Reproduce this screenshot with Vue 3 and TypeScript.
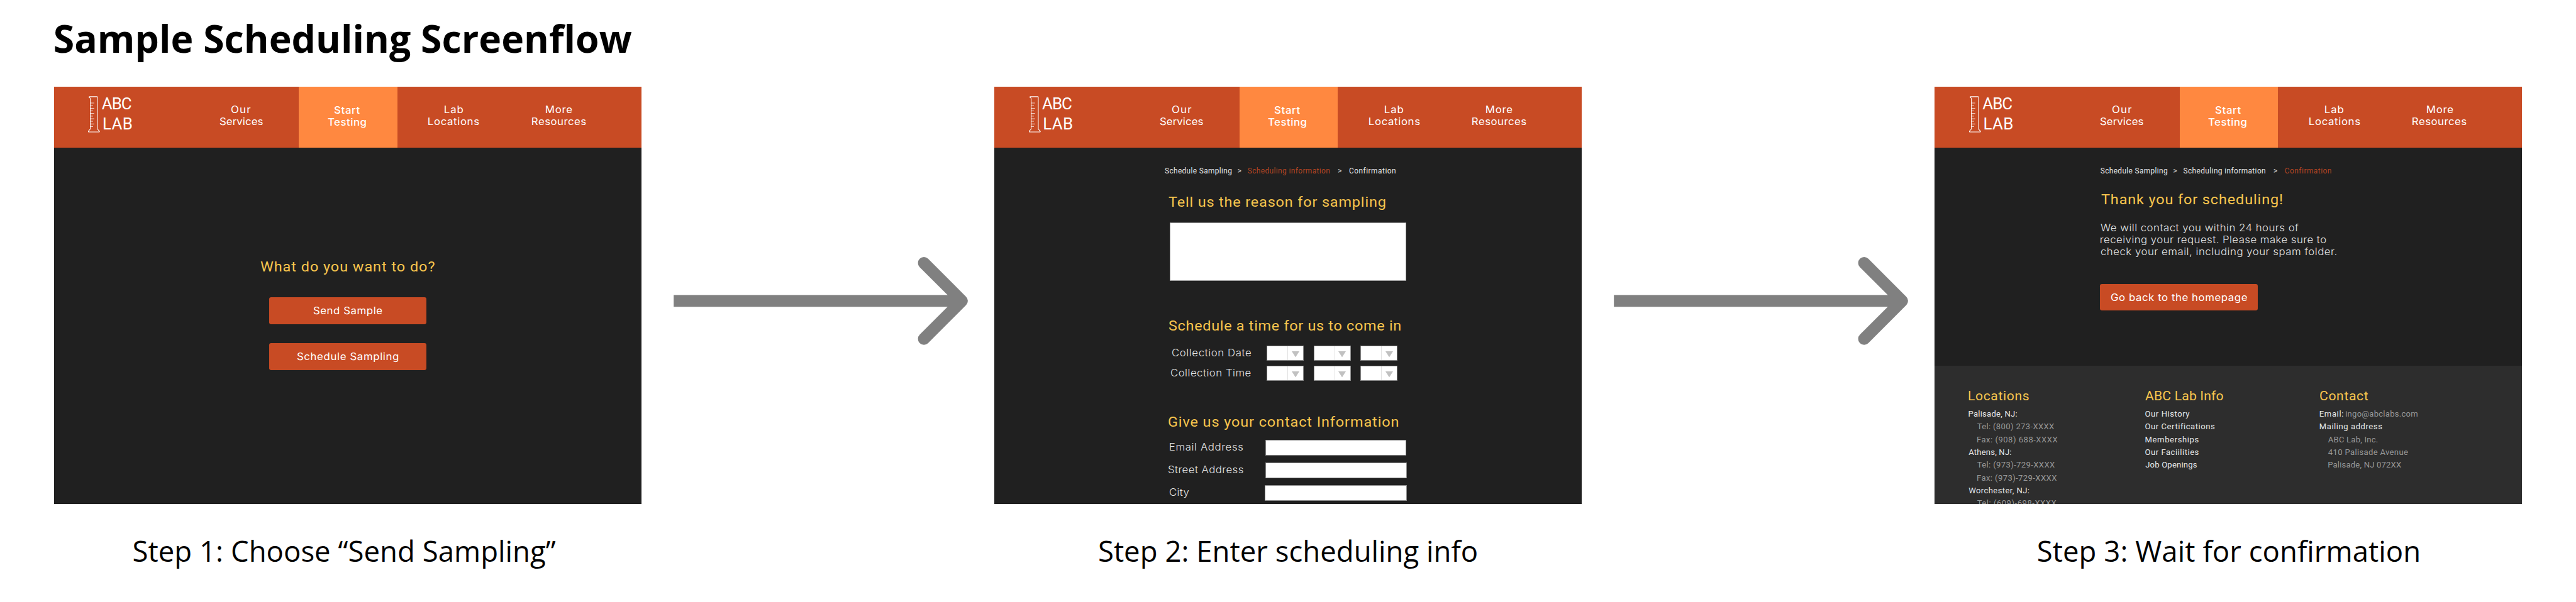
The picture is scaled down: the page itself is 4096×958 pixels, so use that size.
<script setup lang="ts">
import type { Directive } from 'vue'

/**
 * Tracks a run of text out to the given width and trims the side bearings,
 * so that the element's box is exactly as wide as its visible letters.
 * The --stretch property widens the letterforms themselves.
 */
const context = document.createElement('canvas').getContext('2d')!
const vTrack: Directive<HTMLElement, number> = {
  mounted(el, binding) {
    const text = (el.textContent ?? '').trim()
    const css = getComputedStyle(el)
    const stretch = Number(css.getPropertyValue('--stretch')) || 1
    const width = binding.value / stretch
    context.font = `${css.fontWeight} ${css.fontSize} ${css.fontFamily}`
    const m = context.measureText(text)
    const letters = m.actualBoundingBoxLeft + m.actualBoundingBoxRight
    const spacing = text.length > 1 ? (width - letters) / (text.length - 1) : 0
    const trailing = m.actualBoundingBoxRight - m.width - spacing
    el.style.letterSpacing = `${spacing}px`
    el.style.marginLeft = `${m.actualBoundingBoxLeft}px`
    el.style.marginRight = `${trailing + binding.value - width}px`
    if (stretch !== 1) {
      el.style.transformOrigin = `${-m.actualBoundingBoxLeft}px 50%`
      el.style.transform = `scaleX(${stretch})`
    }
  },
}

interface Line {
  text: string
  w: number
}
interface NavItem {
  lines: Line[]
  active?: boolean
}
interface Entry extends Line {
  sub?: boolean
  value?: Line
}

const nav: NavItem[] = [
  { lines: [{ text: 'Our', w: 49 }, { text: 'Services', w: 108 }] },
  { lines: [{ text: 'Start', w: 64 }, { text: 'Testing', w: 96 }], active: true },
  { lines: [{ text: 'Lab', w: 46 }, { text: 'Locations', w: 127 }] },
  { lines: [{ text: 'More', w: 65 }, { text: 'Resources', w: 135 }] },
]

const screens = [
  { id: 'choose', caption: { text: 'Step 1: Choose “Send Sampling”', w: 1062 } },
  { id: 'details', caption: { text: 'Step 2: Enter scheduling info', w: 950 } },
  { id: 'done', caption: { text: 'Step 3: Wait for confirmation', w: 958 } },
]

const crumbs: Line[] = [
  { text: 'Schedule Sampling', w: 168.5 },
  { text: 'Scheduling information', w: 207 },
  { text: 'Confirmation', w: 116 },
]

const choices: Line[] = [
  { text: 'Send Sample', w: 172 },
  { text: 'Schedule Sampling', w: 254 },
]

const pickers = [
  { text: 'Collection Date', w: 198.6, x: 446.6 },
  { text: 'Collection Time', w: 201, x: 443.6 },
]

const fields = [
  { text: 'Email Address', w: 184, x: 441.2, start: 681.2, size: 355.6 },
  { text: 'Street Address', w: 189, x: 437.9, start: 682.2, size: 355 },
  { text: 'City', w: 49, x: 440.8, start: 680.2, size: 357 },
]

const message: Line[] = [
  { text: 'We will contact you within 24 hours of', w: 498 },
  { text: 'receiving your request. Please make sure to', w: 566.5 },
  { text: 'check your email, including your spam folder.', w: 592.5 },
]

const columns: { key: string; title: Line; entries: Entry[] }[] = [
  {
    key: 'locations',
    title: { text: 'Locations', w: 151.7 },
    entries: [
      { text: 'Palisade, NJ:', w: 121.5 },
      { text: 'Tel: (800) 273-XXXX', w: 194, sub: true },
      { text: 'Fax: (908) 688-XXXX', w: 202.5, sub: true },
      { text: 'Athens, NJ:', w: 107 },
      { text: 'Tel: (973)-729-XXXX', w: 195.5, sub: true },
      { text: 'Fax: (973)-729-XXXX', w: 200.5, sub: true },
      { text: 'Worchester, NJ:', w: 152 },
      { text: 'Tel: (609)-698-XXXX', w: 199.5, sub: true },
    ],
  },
  {
    key: 'info',
    title: { text: 'ABC Lab Info', w: 196.8 },
    entries: [
      { text: 'Our History', w: 111.5 },
      { text: 'Our Certifications', w: 173.5 },
      { text: 'Memberships', w: 134 },
      { text: 'Our Faciilities', w: 134 },
      { text: 'Job Openings', w: 129.5 },
    ],
  },
  {
    key: 'contact',
    title: { text: 'Contact', w: 121.4 },
    entries: [
      { text: 'Email:', w: 59, value: { text: 'ingo@abclabs.com', w: 180.5 } },
      { text: 'Mailing address', w: 156.7 },
      { text: 'ABC Lab, Inc.', w: 124, sub: true },
      { text: '410 Palisade Avenue', w: 201, sub: true },
      { text: 'Palisade, NJ 072XX', w: 184, sub: true },
    ],
  },
]

const ticks = [116, 136, 156, 175, 195, 215, 235, 254, 274, 294]
</script>

<template>
  <main class="page">
    <h1 class="title"><span v-track="1451" class="t">Sample Scheduling Screenflow</span></h1>

    <div class="flow">
      <template v-for="(screen, i) in screens" :key="screen.id">
        <svg v-if="i > 0" class="arrow" viewBox="0 0 888 240">
          <path d="M81 120H800" />
          <path class="head" d="M710.5 24.5L806 120L710.5 215.5" />
        </svg>

        <section class="step">
          <div class="screen">
            <header class="bar">
              <div class="logo">
                <svg class="cylinder" viewBox="66 64 90 276">
                  <path
                    d="M83 312V84Q83 78 76 75Q70 68 77 68H133Q137 68 137 72V312L151 328Q155 335 147 335H73Q65 335 69 328Z"
                  />
                  <path
                    v-for="(y, n) in ticks"
                    :key="y"
                    class="tick"
                    :d="`M84 ${y}H${n % 2 ? 104 : 112}`"
                  />
                </svg>
                <div class="name">
                  <div><span v-track="74" class="t">ABC</span></div>
                  <div class="lab"><span v-track="71" class="t">LAB</span></div>
                </div>
              </div>
              <nav class="nav">
                <div v-for="(item, n) in nav" :key="n" class="item" :class="{ active: item.active }">
                  <div v-for="line in item.lines" :key="line.text">
                    <span v-track="line.w" class="t">{{ line.text }}</span>
                  </div>
                </div>
              </nav>
            </header>

            <div v-if="screen.id === 'choose'" class="body choose">
              <h2 class="heading"><span v-track="437" class="t">What do you want to do?</span></h2>
              <div v-for="choice in choices" :key="choice.text" class="button">
                <span v-track="choice.w" class="t">{{ choice.text }}</span>
              </div>
            </div>

            <div v-else class="body" :class="screen.id">
              <div class="crumbs">
                <template v-for="(crumb, n) in crumbs" :key="crumb.text">
                  <span v-if="n > 0" v-track="8.5" class="t sep">&gt;</span>
                  <span v-track="crumb.w" class="t" :class="{ current: n === i }">{{ crumb.text }}</span>
                </template>
              </div>

              <template v-if="screen.id === 'details'">
                <h2 class="heading reason">
                  <span v-track="545" class="t">Tell us the reason for sampling</span>
                </h2>
                <div class="textarea"></div>
                <h2 class="heading time">
                  <span v-track="583" class="t">Schedule a time for us to come in</span>
                </h2>
                <div class="pickers">
                  <div v-for="row in pickers" :key="row.text" class="picker-row">
                    <div class="label" :style="{ paddingLeft: row.x + 'px' }">
                      <span v-track="row.w" class="t">{{ row.text }}</span>
                    </div>
                    <div v-for="n in 3" :key="n" class="select">
                      <svg class="caret" viewBox="0 0 19 15"><path d="M0 0H19L9.5 15Z" /></svg>
                    </div>
                  </div>
                </div>
                <h2 class="heading contact-heading">
                  <span v-track="577.5" class="t">Give us your contact Information</span>
                </h2>
                <div class="fields">
                  <div v-for="row in fields" :key="row.text" class="field-row">
                    <div class="label" :style="{ paddingLeft: row.x + 'px', width: row.start + 'px' }">
                      <span v-track="row.w" class="t">{{ row.text }}</span>
                    </div>
                    <div class="input" :style="{ width: row.size + 'px' }"></div>
                  </div>
                </div>
              </template>

              <template v-else>
                <h2 class="heading thanks">
                  <span v-track="455" class="t">Thank you for scheduling!</span>
                </h2>
                <p class="message">
                  <span v-for="line in message" :key="line.text" class="line">
                    <span v-track="line.w" class="t">{{ line.text }}</span>
                  </span>
                </p>
                <div class="button">
                  <span v-track="342" class="t">Go back to the homepage</span>
                </div>
              </template>
            </div>

            <footer v-if="screen.id === 'done'" class="footer">
              <div v-for="column in columns" :key="column.key" class="column">
                <h3 class="column-title">
                  <span v-track="column.title.w" class="t">{{ column.title.text }}</span>
                </h3>
                <div v-for="entry in column.entries" :key="entry.text" class="entry" :class="{ sub: entry.sub }">
                  <span v-track="entry.w" class="t">{{ entry.text }}</span>
                  <span v-if="entry.value" v-track="entry.value.w" class="t value">{{ entry.value.text }}</span>
                </div>
              </div>
            </footer>
          </div>
          <div class="caption">
            <span v-track="screen.caption.w" class="t">{{ screen.caption.text }}</span>
          </div>
        </section>
      </template>
    </div>
  </main>
</template>

<style>
body {
  margin: 0;
  background: #fff;
}
</style>

<style scoped>
.page {
  zoom: 0.6322;
  width: 6479px;
  height: 1515px;
  overflow: hidden;
  box-sizing: border-box;
  padding: 31px 0 0 135.6px;
  background: #fff;
  color: #000;
  font-family: 'Open Sans', sans-serif;
}
.page * {
  box-sizing: border-box;
}
.t {
  display: inline-block;
  flex: none;
  white-space: nowrap;
  font-variant-ligatures: none;
}
h1,
h2,
h3,
p {
  margin: 0;
}
.title {
  padding-left: 2.4px;
  font-size: 96px;
  line-height: 130px;
  font-weight: 700;
}
.flow {
  display: flex;
  align-items: flex-start;
  margin-top: 57px;
}
.arrow {
  flex: none;
  width: 887.8px;
  height: 240px;
  margin-top: 420px;
  fill: none;
  stroke: #808080;
  stroke-width: 30;
}
.head {
  stroke-linecap: round;
  stroke-linejoin: round;
}
.step {
  flex: none;
  width: 1477.4px;
}
.screen {
  display: flex;
  flex-direction: column;
  height: 1050px;
  overflow: hidden;
  background: #202020;
}
.caption {
  display: flex;
  justify-content: center;
  margin-top: 71px;
  font-size: 72px;
  line-height: 98px;
}
.step:first-child .caption {
  padding-right: 15px;
}

.bar {
  flex: none;
  display: flex;
  height: 154px;
  background: #c84b24;
  color: #fff;
}
.logo {
  display: flex;
  width: 325.6px;
  padding-left: 86.4px;
  gap: 4px;
  font-family: Roboto, sans-serif;
  font-size: 41px;
  line-height: 50px;
}
.cylinder {
  width: 30px;
  height: 92px;
  margin-top: 23.3px;
  fill: none;
  stroke: #fff;
  stroke-width: 5;
}
.tick {
  stroke-width: 3.6;
}
.name {
  padding-top: 19.5px;
}
.lab {
  padding-left: 5px;
}
.nav {
  --stretch: 1.1;
  display: grid;
  grid-template-columns: 290.8px 247px 285px 244px;
  font-family: Inter, sans-serif;
  font-size: 24.2px;
  line-height: 30px;
  text-align: center;
}
.item {
  padding-top: 44px;
}
.item.active {
  padding-top: 46px;
  padding-right: 5px;
  background: #ff8840;
  font-weight: 500;
}

.body {
  flex: none;
}
.heading {
  --stretch: 1.03;
  color: #f8c64e;
  font-family: Roboto, sans-serif;
  font-size: 36px;
  line-height: 44px;
  font-weight: 400;
}
.button {
  --stretch: 1.1;
  display: flex;
  justify-content: center;
  width: 396px;
  height: 68px;
  border-radius: 5px;
  background: #c84b24;
  color: #fff;
  font-family: Inter, sans-serif;
  font-size: 24.2px;
  line-height: 69px;
}
.choose {
  display: flex;
  flex-direction: column;
  align-items: center;
  padding-top: 278px;
}
.choose .button {
  margin-top: 48px;
}
.choose .heading + .button {
  margin-top: 54px;
}

.crumbs {
  display: flex;
  padding-top: 47.3px;
  color: #e6e6e6;
  font-family: Roboto, sans-serif;
  font-size: 18.8px;
  line-height: 24px;
}
.details .crumbs {
  padding-left: 428.7px;
}
.done .crumbs {
  padding-left: 416.9px;
}
.current {
  color: #b44523;
}
.sep {
  padding: 0 15.4px;
}
.sep ~ .sep {
  padding: 0 19px 0 21px;
}

.reason {
  margin-top: 44px;
  padding-left: 438.9px;
}
.textarea {
  width: 595.6px;
  height: 147.4px;
  margin: 28px 0 0 440.8px;
  border: 1px solid #9a9a9a;
  background: #fff;
}
.time {
  margin-top: 92.3px;
  padding-left: 439.8px;
}
.pickers {
  display: grid;
  gap: 11.3px;
  margin-top: 26.6px;
}
.picker-row {
  display: grid;
  grid-template-columns: 660.2px repeat(3, 93px);
  column-gap: 25px;
}
.label {
  --stretch: 1.1;
  flex: none;
  color: #e4e4e4;
  font-family: Inter, sans-serif;
  font-size: 24.2px;
  line-height: 39px;
  font-weight: 300;
}
.select {
  height: 39.2px;
  padding: 13px 0 0 61px;
  border: 1px solid #8a8a8a;
  background: linear-gradient(#e2e2e2, #e2e2e2) 50.5px 0 / 2px 100% no-repeat #fff;
}
.caret {
  display: block;
  width: 19px;
  height: 15px;
  fill: #c1c1c1;
}
.contact-heading {
  margin-top: 82px;
  padding-left: 438.2px;
}
.fields {
  display: grid;
  gap: 17.7px;
  margin-top: 22.1px;
}
.field-row {
  display: flex;
}
.input {
  height: 39.6px;
  border: 1px solid #8a8a8a;
  background: #fff;
}

.thanks {
  margin-top: 38.4px;
  padding-left: 418px;
}
.message {
  --stretch: 1.1;
  margin-top: 32.5px;
  padding-left: 417.5px;
  color: #e4e4e4;
  font-family: Inter, sans-serif;
  font-size: 24.2px;
  line-height: 30.4px;
  font-weight: 300;
}
.line {
  display: block;
}
.done .button {
  margin: 64.9px 0 0 416.4px;
}
.footer {
  flex: none;
  display: grid;
  grid-template-columns: 444.5px 438.5px 400px;
  height: 500px;
  margin-top: 138px;
  padding: 57px 0 0 85.3px;
  background: #2d2d2d;
  color: #e8e8e8;
  font-family: Roboto, sans-serif;
}
.column-title {
  --stretch: 1.03;
  margin-bottom: 9.6px;
  color: #f8c64e;
  font-size: 32.5px;
  line-height: 40px;
  font-weight: 400;
}
.entry {
  display: flex;
  gap: 6.5px;
  font-size: 20.7px;
  line-height: 32.1px;
}
.sub {
  padding-left: 21.3px;
  color: #999;
}
.value {
  color: #999;
}
</style>
